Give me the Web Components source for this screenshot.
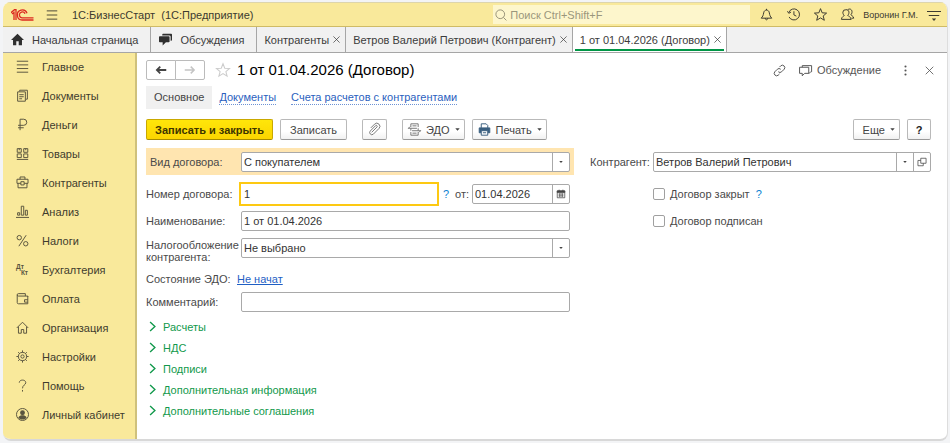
<!DOCTYPE html>
<html lang="ru">
<head>
<meta charset="utf-8">
<meta name="viewport" content="width=device-width, initial-scale=1">
<title>1С:БизнесСтарт</title>
<style>
  body {
    margin: 0;
    background: #f3f4f6;
    color: #444;
    font: 11px/16px "Liberation Sans", Arial, sans-serif;
  }
  form-panel { color: #4a4a4a; }
</style>
</head>
<body>

<app-window>
  <app-header slot="header" user="Воронин Г.М.">1С:БизнесСтарт&nbsp; (1С:Предприятие)</app-header>

  <tab-bar slot="tabs">
    <tab-item icon="home" wide>Начальная страница</tab-item>
    <tab-item icon="chat" wide>Обсуждения</tab-item>
    <tab-item closable>Контрагенты</tab-item>
    <tab-item closable>Ветров Валерий Петрович (Контрагент)</tab-item>
    <tab-item closable active>1 от 01.04.2026 (Договор)</tab-item>
  </tab-bar>

  <side-nav slot="nav">
    <nav-item icon="list">Главное</nav-item>
    <nav-item icon="docs">Документы</nav-item>
    <nav-item icon="ruble">Деньги</nav-item>
    <nav-item icon="goods">Товары</nav-item>
    <nav-item icon="case">Контрагенты</nav-item>
    <nav-item icon="chart">Анализ</nav-item>
    <nav-item icon="percent">Налоги</nav-item>
    <nav-item icon="ledger">Бухгалтерия</nav-item>
    <nav-item icon="wallet">Оплата</nav-item>
    <nav-item icon="house">Организация</nav-item>
    <nav-item icon="gear">Настройки</nav-item>
    <nav-item icon="question">Помощь</nav-item>
    <nav-item icon="person">Личный кабинет</nav-item>
  </side-nav>

  <page-title>1 от 01.04.2026 (Договор)</page-title>
  <page-links></page-links>

  <command-bar>
    <button-group>
      <cmd-button primary>Записать и закрыть</cmd-button>
      <cmd-button roomy>Записать</cmd-button>
    </button-group>
    <cmd-button icon="clip" name="Файлы"></cmd-button>
    <button-group>
      <cmd-button icon="edo" menu>ЭДО</cmd-button>
      <cmd-button icon="printer" menu>Печать</cmd-button>
    </button-group>
    <button-group slot="end">
      <cmd-button menu roomy>Еще</cmd-button>
      <cmd-button strong>?</cmd-button>
    </button-group>
  </command-bar>

  <form-panel>
    <form-row marked><form-field label="Вид договора:" type="select" value="С покупателем"></form-field></form-row>
    <form-row>
      <form-field label="Номер договора:" value="1" current></form-field>
      <help-mark></help-mark>
      <form-field label="от:" type="date" value="01.04.2026" compact></form-field>
    </form-row>
    <form-row><form-field label="Наименование:" value="1 от 01.04.2026"></form-field></form-row>
    <form-row><form-field label="Налогообложение контрагента:" type="select" value="Не выбрано" tall></form-field></form-row>
    <form-row><link-field label="Состояние ЭДО:">Не начат</link-field></form-row>
    <form-row><form-field label="Комментарий:" value=""></form-field></form-row>

    <form-row slot="side"><form-field label="Контрагент:" type="lookup" value="Ветров Валерий Петрович"></form-field></form-row>
    <form-row slot="side" indent><check-field>Договор закрыт</check-field><help-mark></help-mark></form-row>
    <form-row slot="side" indent><check-field>Договор подписан</check-field></form-row>
  </form-panel>

  <fold-list>
    <fold-group>Расчеты</fold-group>
    <fold-group>НДС</fold-group>
    <fold-group>Подписи</fold-group>
    <fold-group>Дополнительная информация</fold-group>
    <fold-group>Дополнительные соглашения</fold-group>
  </fold-list>
</app-window>

<script>
  const ICONS = {
    burger: '<path d="M1 2.5h14M1 8h14M1 13.5h14"/>',
    list: '<path d="M1 1.5h14M1 6h14M1 10.500h14M1 15h14"/>',
    docs: '<path d="M4.500 3V1.500h9.500v11h-2"/><path d="M2 3.500h9.500v11.500H2z"/><path d="M4 7h5.500M4 9.500h5.500M4 12h3.500"/>',
    ruble: '<path d="M5 15V1.500h4.500a3.700 3.700 0 0 1 0 7.500H2.500M2.500 12h7"/>',
    goods: '<path d="M1.500 2h5v4.500h-5zM9.500 2h5v4.500h-5zM1.500 8.500h5v4.500h-5zM9.500 8.500h5v4.500h-5z"/><path d="M4 2v2M12 2v2M1 15.300h14"/>',
    case: '<path d="M5 4V1.200h6V4M1.200 4h13.600v5H1.200zM2.500 9v5.500h11V9"/><path fill="#f9e99b" d="M6 7h4v4H6z"/>',
    chart: '<path d="M0 15.300h16M2 12.500V9.500h2.500v3zM6.500 12.500v-11h3v11zM11.500 12.500v-6h2.500v6z"/>',
    percent: '<circle cx="4" cy="4.500" r="2.700"/><circle cx="12" cy="12" r="2.700"/><path d="M12.500 1.500l-9 13.500"/>',
    ledger: '<g fill="currentColor" stroke="none" font-family="Liberation Sans, sans-serif" font-weight="700" font-size="8"><text x="0" y="7">Дт</text><text x="6" y="15">Кт</text></g>',
    wallet: '<path d="M14.500 6V5H3a1.500 1.500 0 0 1-1.500-1.500V13A1.500 1.500 0 0 0 3 14.500h11.500V5M1.500 3.500A1.500 1.500 0 0 1 3 2h8.500v3M14.500 9.500h-4v3h4"/>',
    house: '<path d="M1 8.500L8 1.500l7 7M3 7v8h3.500v-4.500h3V15H13V7"/>',
    gear: '<circle cx="8" cy="8" r="5"/><circle cx="8" cy="8" r="2"/><path d="M8 .5V3M8 13v2.500M.5 8H3M13 8h2.500M2.700 2.700l1.800 1.800M11.500 11.500l1.800 1.800M13.300 2.700l-1.800 1.800M4.500 11.500l-1.800 1.800"/>',
    question: '<path d="M4 4.500C4 .3 12 .3 12 4.500 12 7.500 8 7.300 8 11.500M8 13.500v2"/>',
    person: '<circle cx="8" cy="8" r="7.400"/><g fill="currentColor" stroke="none"><circle cx="8" cy="5.800" r="3"/><path d="M2.800 12c1-2.500 3.200-3 5.200-3s4.200.5 5.200 3c-1.500 1.700-3.200 2.300-5.200 2.300S4.300 13.700 2.800 12z"/></g>',
    home: '<path fill="currentColor" stroke="none" d="M8 1L0 8.500h2.500V15h4v-5h3v5h4V8.500H16z"/>',
    chat: '<g fill="currentColor" stroke="none"><path d="M5 1h10a1 1 0 0 1 1 1v6.500a1 1 0 0 1-1 1h-.7V4.500a1.500 1.500 0 0 0-1.500-1.500H4V2a1 1 0 0 1 1-1z"/><path d="M1 4h11a1 1 0 0 1 1 1v5.500a1 1 0 0 1-1 1H8.500L4.500 15.500v-4H1a1 1 0 0 1-1-1V5a1 1 0 0 1 1-1z"/></g>',
    talk: '<path d="M4 4V2h11.500v7.500h-1L12 12M.7 4H12v7.500H7L4 14.500v-3H.7z"/>',
    bell: '<path d="M8 2.500V1M1.500 12.500c2-2 2.500-3.500 3-6.500C5 1.500 11 1.500 11.500 6c.5 3 1 4.500 3 6.500zM6.500 12.500c0 2.700 3 2.700 3 0"/>',
    history: '<path d="M2.200 5.500A6.800 6.800 0 1 1 2.500 11M.5 4l1.700 2.500L5 5M8.500 4v4.500l3 1.500"/>',
    star: '<path d="M8 .8l2 5.100 5.500.4-4.200 3.500 1.400 5.300L8 12.200l-4.700 2.900 1.400-5.300L.5 6.300 6 5.900z"/>',
    people: '<path d="M6 2.200a3 3.300 0 0 1 3.800 3c0 2-.8 3.300-1.500 3.800.5 1.500 3.700 1.200 4.200 5H.5C1 10.200 3.500 10.500 4 9 3 8.500 2.300 7.200 2.300 5.200A3.300 3.300 0 0 1 6 2.200zM8.500 2c2.500-1.800 5.500 0 5 3.500-.2 1.500-.7 2.200-1.300 2.800.5 1.400 3 1.200 3.500 4.200H13"/>',
    service: '<path d="M0 4h16M2 8.500h12"/><path d="M5.500 12h5L8 14.800z" fill="currentColor" stroke="none"/>',
    search: '<circle cx="7" cy="7" r="5.800"/><path d="M11.200 11.200l4 4"/>',
    cross: '<path d="M2.500 2.500l11 11M13.500 2.500l-11 11"/>',
    back: '<path stroke-width="2.400" d="M15 8H3M7 3.500L2.500 8 7 12.500"/>',
    forward: '<path stroke-width="2" d="M1 8h12M9 3.500L13.500 8 9 12.500"/>',
    link: '<path d="M6.500 9.500a3 3 0 0 0 4.200 0l3.200-3.200a3 3 0 0 0-4.200-4.200L8 3.800M9.500 6.500a3 3 0 0 0-4.200 0L2.100 9.700a3 3 0 0 0 4.200 4.200L8 12.200"/>',
    dots: '<g fill="currentColor" stroke="none"><circle cx="8" cy="3" r="1.300"/><circle cx="8" cy="8" r="1.300"/><circle cx="8" cy="13" r="1.300"/></g>',
    clip: '<path d="M4.500 11.500l6.500-6.500a1.200 1.200 0 0 0-1.700-1.700L2.700 10a2.700 2.700 0 0 0 3.800 3.800l7-7a3.800 3.800 0 0 0-5.400-5.400L3.500 6"/>',
    edo: '<path d="M3.500 5V1h9v4M3.500 11v4h9v-4M5.500 3.500h5M5.500 12.500h5M0 6.500h11M2.500 4.500l-2 2M5 9.500h11M13.500 11.500l2-2M3.500 6.500v3M12.500 6.500v3"/>',
    printer: '<path fill="#fff" d="M4 6V1h6l2 2v3"/><path fill="currentColor" d="M1.500 6h13v6h-13z"/><path fill="#fff" d="M4 9.500h8V15H4z"/><path d="M6 12h4"/>',
    calendar: '<path fill="currentColor" d="M2 3h12v2.500H2z"/><path d="M2 3h12v11H2zM5 1v3M11 1v3M4 8h8M4 11h8M6 7v6M10 7v6"/>',
    open: '<path d="M6 2h8.500v8H6zM6 5.500H1.500V14H10v-4"/>',
    fold: '<path stroke-width="2" d="M4.500 1.500L11.500 8l-7 6.500"/>',
    caret: '<path fill="currentColor" stroke="none" d="M1 4h14l-7 8z"/>'
  };

  // every element renders its view() into an open root once
  class BaseElement extends HTMLElement {
    constructor() {
      super();
      this.shadow = this.attachShadow({mode: "open"});
    }
    connectedCallback() {
      this.shadow.innerHTML = "<style>*{box-sizing:border-box}button,input,select{font:inherit;color:inherit;margin:0}a{color:inherit;text-decoration:none}</style>" + this.view();
    }
    attr(name) { return this.getAttribute(name) || ""; }
  }

  class UiIcon extends BaseElement {
    view() {
      return `<style>
        :host { display: block; flex: none; width: var(--size, 14px); height: var(--size, 14px); }
        svg { display: block; width: 100%; height: 100%; overflow: visible; fill: none; stroke: currentColor; stroke-width: 1.2; }
      </style><svg viewBox="0 0 16 16" aria-hidden="true">${ICONS[this.attr("name")]}</svg>`;
    }
  }

  class AppWindow extends BaseElement {
    view() {
      return `<style>
        :host { display: flex; min-height: 100vh; padding: 2px 2px 2px 3px; box-sizing: border-box; }
        .frame { flex: 1; min-width: 0; display: flex; flex-direction: column; overflow: hidden; background: #fff;
          border-right: 1px solid #ddd; border-bottom: 2px solid #d8d8d8; border-radius: 8px; }
        .body { flex: 1; display: flex; }
        main { flex: 1; min-width: 0; display: flex; flex-direction: column; padding: 6px 16px 16px 9px; }
      </style>
      <div class="frame">
        <slot name="header"></slot>
        <slot name="tabs"></slot>
        <div class="body"><slot name="nav"></slot><main><slot></slot></main></div>
      </div>`;
    }
  }

  class AppHeader extends BaseElement {
    view() {
      return `<style>
        :host { display: block; background: #f9e99b; border-top: 1px solid #ddd5ad; border-bottom: 1px solid #cfbb66; color: #3c3a30; }
        header { display: flex; align-items: center; height: 23px; padding: 0 6px 0 8px; }
        .logo { width: 23px; height: 12px; flex: none; }
        .plain { display: block; padding: 0; border: 0; background: none; }
        .menu { margin: 0 14px 0 12px; --size: 12px; }
        .name { flex: 1; white-space: nowrap; }
        .search { display: flex; align-items: center; gap: 3px; width: 257px; height: 19px; padding: 0 2px; background: #fdf6cc; color: #8d8970; --size: 12px; }
        input { flex: 1; min-width: 0; border: 0; padding: 0; background: none; outline: 0; }
        input::placeholder { color: #9b977c; opacity: 1; }
        .tools { display: flex; align-items: center; gap: 14px; margin-left: 10px; --size: 13px; }
        .user { margin: 0 9px; font-size: 9px; }
      </style>
      <header>
        <svg class="logo" viewBox="0 0 23 12" fill="none" stroke="#dc2a20" stroke-width="1.300" role="img" aria-label="1С">
          <path d="M0 3.700L3.500.7H5V11M1 5l2-1.500V11"/>
          <path d="M16 4.200A5 5 0 1 0 11.500 11H22.500M14 4.800A2.900 2.900 0 1 0 11.500 8.800H22.500"/>
        </svg>
        <button class="plain menu" aria-label="Меню"><ui-icon name="burger"></ui-icon></button>
        <span class="name"><slot></slot></span>
        <label class="search"><ui-icon name="search"></ui-icon><input type="search" placeholder="Поиск Ctrl+Shift+F" aria-label="Поиск"></label>
        <div class="tools">
          <button class="plain" aria-label="Уведомления"><ui-icon name="bell"></ui-icon></button>
          <button class="plain" aria-label="История"><ui-icon name="history"></ui-icon></button>
          <button class="plain" aria-label="Избранное"><ui-icon name="star"></ui-icon></button>
          <button class="plain" aria-label="Пользователи"><ui-icon name="people"></ui-icon></button>
        </div>
        <span class="user">${this.attr("user")}</span>
        <button class="plain" aria-label="Сервис"><ui-icon name="service"></ui-icon></button>
      </header>`;
    }
  }

  class TabBar extends BaseElement {
    view() {
      return `<style>
        :host { display: flex; height: 26px; box-sizing: border-box; background: #f1f1f1; border-bottom: 1px solid #a6a6a6; color: #3c3c3c; }
      </style><slot></slot>`;
    }
  }

  class TabItem extends BaseElement {
    view() {
      const icon = this.attr("icon");
      return `<style>
        :host { display: flex; align-items: center; gap: 3px; padding: 0 4px 0 7px; border-right: 1px solid #a6a6a6; white-space: nowrap; --size: 9px; }
        :host([wide]) { gap: 8px; padding: 0 12px 0 8px; --size: 13px; }
        :host([active]) { background: linear-gradient(#009646, #009646) 2px 22px / calc(100% - 4px) 2px no-repeat #fff; }
        button { padding: 0; border: 0; background: none; }
        ui-icon { color: #2f2f2f; }
      </style>
      ${icon ? `<ui-icon name="${icon}"></ui-icon>` : ""}
      <a href="#"><slot></slot></a>
      ${this.hasAttribute("closable") ? '<button aria-label="Закрыть"><ui-icon name="cross"></ui-icon></button>' : ""}`;
    }
  }

  class SideNav extends BaseElement {
    view() {
      return `<style>
        :host { display: block; flex: none; width: 134px; box-sizing: border-box; background: #f9e99b; border-right: 2px solid #cfc17c; color: #3f3c2e; }
        nav { display: flex; flex-direction: column; }
      </style><nav><slot></slot></nav>`;
    }
  }

  class NavItem extends BaseElement {
    view() {
      return `<style>
        :host { display: block; }
        a { display: flex; align-items: center; gap: 13px; height: 29px; padding: 0 0 2px 13px; white-space: nowrap; --size: 13px; }
        ui-icon { color: #5a553f; }
      </style><a href="#"><ui-icon name="${this.attr("icon")}"></ui-icon><slot></slot></a>`;
    }
  }

  class PageTitle extends BaseElement {
    view() {
      return `<style>
        :host { display: flex; align-items: center; height: 22px; }
        button { display: flex; align-items: center; padding: 0; border: 0; background: none; }
        .history { display: flex; }
        .history button { width: 30px; height: 20px; justify-content: center; border: 1px solid #bbb; border-radius: 2px 0 0 2px; background: #fff; --size: 12px; }
        .history button + button { margin-left: -1px; border-radius: 0 2px 2px 0; color: #c4c4c4; }
        .fav { margin: 0 7px 0 11px; color: #ccc; }
        h1 { flex: 1; margin: 0; color: #000; font-size: 15px; line-height: 22px; font-weight: 400; white-space: nowrap; }
        .actions { display: flex; align-items: center; margin-right: -4px; color: #555; --size: 13px; }
        .talk { gap: 5px; margin: 0 18px 0 13px; }
        .close { margin-left: 12px; --size: 11px; }
      </style>
      <div class="history">
        <button aria-label="Назад"><ui-icon name="back"></ui-icon></button>
        <button aria-label="Вперед"><ui-icon name="forward"></ui-icon></button>
      </div>
      <button class="fav" aria-label="В избранное"><ui-icon name="star"></ui-icon></button>
      <h1><slot></slot></h1>
      <div class="actions">
        <button aria-label="Ссылка"><ui-icon name="link"></ui-icon></button>
        <button class="talk"><ui-icon name="talk"></ui-icon>Обсуждение</button>
        <button aria-label="Действия"><ui-icon name="dots"></ui-icon></button>
        <button class="close" aria-label="Закрыть"><ui-icon name="cross"></ui-icon></button>
      </div>`;
    }
  }

  class PageLinks extends BaseElement {
    view() {
      return `<style>
        :host { display: block; margin: 5px 0 10px; }
        nav { display: flex; align-items: center; gap: 15px; height: 23px; white-space: nowrap; }
        a { color: #2b5fbe; border-bottom: 1px dotted #6d92d4; line-height: 14px; }
        .current { margin-right: -8px; padding: 0 8px; border: 0; background: #f0f0f0; color: #444; line-height: 23px; }
      </style>
      <nav><a class="current" href="#" aria-current="page">Основное</a><a href="#">Документы</a><a href="#">Счета расчетов с контрагентами</a></nav>`;
    }
  }

  class CommandBar extends BaseElement {
    view() {
      return `<style>
        :host { display: flex; justify-content: space-between; margin-bottom: 8px; }
        div { display: flex; gap: 15px; }
      </style><div><slot></slot></div><slot name="end"></slot>`;
    }
  }

  class ButtonGroup extends BaseElement {
    view() {
      return `<style>:host { display: flex; gap: 7px; }</style><slot></slot>`;
    }
  }

  class CmdButton extends BaseElement {
    view() {
      const icon = this.attr("icon");
      return `<style>
        :host { display: block; }
        button { display: flex; align-items: center; justify-content: center; gap: 5px; min-width: 24px; height: 21px; padding: 0 5px;
          border: 1px solid #b9b9b9; border-bottom-color: #999; border-radius: 2px; background: linear-gradient(#fff 60%, #f1f1f1); color: #444; white-space: nowrap; --size: 13px; }
        :host([roomy]) button { padding: 0 9px; }
        :host([menu]) button { padding-right: 4px; }
        :host([primary]) button { padding: 0 8px; border-color: #c9a800; border-bottom-color: #a68b00; background: linear-gradient(#ffe60a, #fbd500); color: #3d3500; font-weight: 700; }
        :host([strong]) button { font-weight: 700; color: #222; }
        ui-icon[name=clip], ui-icon[name=edo] { color: #777; }
        ui-icon[name=printer] { color: #3a5f80; }
        ui-icon[name=caret] { --size: 5px; }
      </style>
      <button aria-label="${this.attr("name") || this.textContent}">${icon ? `<ui-icon name="${icon}"></ui-icon>` : ""}${this.textContent ? "<slot></slot>" : ""}${this.hasAttribute("menu") ? '<ui-icon name="caret"></ui-icon>' : ""}</button>`;
    }
  }

  class FormPanel extends BaseElement {
    view() {
      return `<style>
        :host { display: grid; grid-template-columns: 428px minmax(0, 1fr); gap: 16px; align-items: start; }
        div { display: flex; flex-direction: column; }
      </style><div><slot></slot></div><div><slot name="side"></slot></div>`;
    }
  }

  class FormRow extends BaseElement {
    view() {
      return `<style>
        :host { display: flex; align-items: center; height: 27px; padding-right: 4px; }
        :host(:first-child), :host([slot=side]:not([indent])) { margin-bottom: 5px; }
        :host([marked]) { padding-left: 4px; background: #ffe5b0; --label: 91px; }
        :host([slot=side]) { padding-right: 0; --label: 63px; }
        :host([indent]) { padding-left: 63px; }
      </style><slot></slot>`;
    }
  }

  class FormField extends BaseElement {
    view() {
      const type = this.attr("type") || "text";
      const value = this.attr("value");
      const control = type === "select"
        ? `<select id="control"><option>${value}</option></select>`
        : `<input id="control" type="text" value="${value}">`;
      const buttons = {
        text: "",
        select: '<span class="side"><ui-icon name="caret"></ui-icon></span>',
        date: '<button class="side" aria-label="Выбрать дату"><ui-icon name="calendar"></ui-icon></button>',
        lookup: '<button class="side" aria-label="Выбрать"><ui-icon name="caret"></ui-icon></button><button class="side" aria-label="Открыть"><ui-icon name="open"></ui-icon></button>'
      }[type];
      return `<style>
        :host { display: flex; flex: 1; align-items: flex-start; min-width: 0; height: 20px; }
        :host([compact]) { flex: none; width: 115px; --label: 17px; }
        label { flex: none; width: var(--label, 95px); padding-top: 4px; line-height: 12px; }
        :host([tall]) label { padding-top: 1px; }
        .box { display: flex; flex: 1; min-width: 0; height: 20px; border: 1px solid #a9a9a9; border-radius: 2px; background: #fff; }
        :host([current]) .box { outline: 2px solid #fdc912; border-color: #fff; border-radius: 0; }
        input, select { flex: 1; width: 0; min-width: 0; padding: 0 2px; border: 0; background: none; outline: 0; appearance: none; color: #333; }
        .side { display: flex; align-items: center; justify-content: center; flex: none; width: 17px; padding: 0; border: 0; border-left: 1px solid #a9a9a9; background: none; color: #444; --size: 10px; }
        ui-icon[name=caret] { --size: 4px; }
      </style>
      <label for="control">${this.attr("label")}</label>
      <div class="box">${control}${buttons}</div>`;
    }
  }

  class LinkField extends BaseElement {
    view() {
      return `<style>
        :host { display: flex; padding-top: 8px; white-space: nowrap; }
        span { width: 91px; }
        a { color: #1f5fc4; text-decoration: underline; }
      </style><span>${this.attr("label")}</span><a href="#"><slot></slot></a>`;
    }
  }

  class CheckField extends BaseElement {
    view() {
      return `<style>
        :host { display: block; }
        label { display: flex; align-items: center; gap: 5px; white-space: nowrap; }
        input { appearance: none; width: 12px; height: 12px; border: 1px solid #a0a0a0; border-radius: 2px; background: #fff; }
        input:checked { background: #fdc912; }
      </style><label><input type="checkbox"><slot></slot></label>`;
    }
  }

  class HelpMark extends BaseElement {
    view() {
      return `<style>
        :host { display: block; margin: 0 6px; }
        button { display: block; padding: 0; border: 0; background: none; color: #0b83d2; }
      </style><button aria-label="?">?</button>`;
    }
  }

  class FoldList extends BaseElement {
    view() {
      return `<style>:host { display: flex; flex-direction: column; padding-top: 1px; }</style><slot></slot>`;
    }
  }

  class FoldGroup extends BaseElement {
    view() {
      return `<style>
        :host { display: block; color: #12994c; }
        button { display: flex; align-items: center; gap: 5px; height: 21px; padding: 0 0 0 1px; border: 0; background: none; --size: 11px; }
      </style><button aria-expanded="false"><ui-icon name="fold"></ui-icon><slot></slot></button>`;
    }
  }

  customElements.define("ui-icon", UiIcon);
  customElements.define("app-window", AppWindow);
  customElements.define("app-header", AppHeader);
  customElements.define("tab-bar", TabBar);
  customElements.define("tab-item", TabItem);
  customElements.define("side-nav", SideNav);
  customElements.define("nav-item", NavItem);
  customElements.define("page-title", PageTitle);
  customElements.define("page-links", PageLinks);
  customElements.define("command-bar", CommandBar);
  customElements.define("button-group", ButtonGroup);
  customElements.define("cmd-button", CmdButton);
  customElements.define("form-panel", FormPanel);
  customElements.define("form-row", FormRow);
  customElements.define("form-field", FormField);
  customElements.define("link-field", LinkField);
  customElements.define("check-field", CheckField);
  customElements.define("help-mark", HelpMark);
  customElements.define("fold-list", FoldList);
  customElements.define("fold-group", FoldGroup);
</script>
</body>
</html>
